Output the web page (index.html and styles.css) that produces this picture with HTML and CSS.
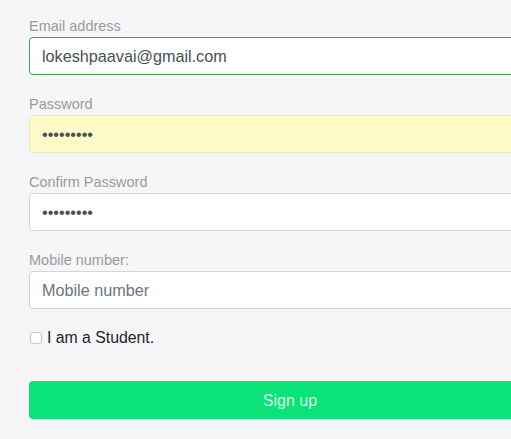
FILE: index.html
```html
<!DOCTYPE html>
<html>
<head>
<meta charset="utf-8">
<link rel="stylesheet" href="styles.css">
</head>
<body>
<form class="signup">
  <div class="group">
    <label class="label">Email address</label>
    <input class="field field-focus" type="email" value="lokeshpaavai@gmail.com">
  </div>
  <div class="group">
    <label class="label">Password</label>
    <input class="field field-autofill" type="password" value="123456789">
  </div>
  <div class="group">
    <label class="label">Confirm Password</label>
    <input class="field" type="password" value="123456789">
  </div>
  <div class="group">
    <label class="label">Mobile number:</label>
    <input class="field" type="text" placeholder="Mobile number">
  </div>
  <div class="check-row">
    <input class="check" type="checkbox" id="student">
    <label class="check-label" for="student">I am a Student.</label>
  </div>
  <button class="submit" type="button">Sign up</button>
</form>
</body>
</html>
```

FILE: styles.css
```css
html, body {
  margin: 0;
  padding: 0;
  overflow: hidden;
  background: #f6f6f8;
}
body {
  font-family: "Liberation Sans", Arial, sans-serif;
  padding: 17px 0 0 29px;
}
.signup {
  width: 522px;
  display: flex;
  flex-direction: column;
}
.group {
  display: flex;
  flex-direction: column;
  margin-bottom: 20px;
}
.label {
  font-size: 14.5px;
  line-height: 19px;
  padding-bottom: 1px;
  color: #9a9a9a;
}
.field {
  box-sizing: border-box;
  height: 38px;
  width: 100%;
  margin: 0;
  padding: 0 12px;
  font-family: "Liberation Sans", Arial, sans-serif;
  font-size: 16.2px;
  color: #495057;
  background: #fff;
  border: 1px solid #d4d4d4;
  border-radius: 4px;
  outline: none;
}
.field::placeholder {
  color: #6c757d;
}
.field-focus {
  border-color: #3ca35a;
}
.field-autofill {
  background: #fefbc8;
  border-color: #f0e4c4;
}
.check-row {
  display: flex;
  align-items: center;
  height: 18px;
}
.check {
  -webkit-appearance: none;
  appearance: none;
  box-sizing: border-box;
  margin: 0 5px 0 1px;
  width: 12px;
  height: 12px;
  border: 1px solid #c4c4c4;
  border-radius: 3px;
  background: #fff;
}
.check-label {
  font-size: 15.8px;
  color: #212529;
}
.submit {
  margin-top: 34px;
  height: 38px;
  border: none;
  border-radius: 4px;
  background: #0be378;
  color: #d9fde8;
  font-family: "Liberation Sans", Arial, sans-serif;
  font-size: 16px;
  line-height: 38px;
  padding: 1px 0 0;
}
```
